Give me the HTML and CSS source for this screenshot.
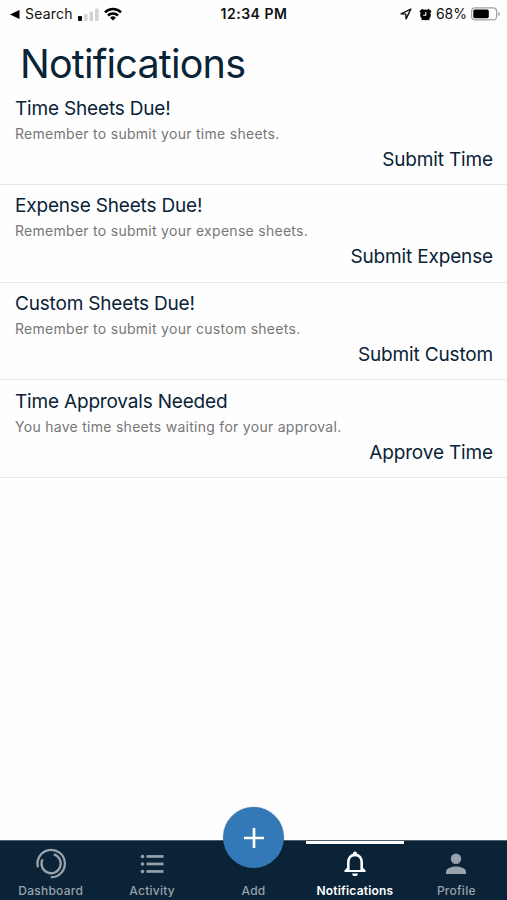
FILE: index.html
```html
<!DOCTYPE html>
<html lang="en">
<head>
    <meta charset="UTF-8">
    <meta name="viewport" content="width=device-width, initial-scale=1.0">
    <title>Notifications</title>
    <link rel="stylesheet" href="styles.css">
</head>
<body>
    <header class="status-bar">
        <div class="status-left">
            <svg class="back" width="10" height="9" viewBox="0 0 10 9"><path d="M0 4.5 9.5 0v9z"/></svg>
            <span class="search">Search</span>
            <svg class="signal" width="22" height="13" viewBox="0 0 22 13">
                <rect x="0" y="8" width="4" height="5" rx="1"/>
                <g fill="#d3d3d3">
                    <rect x="6" y="6" width="3.6" height="7" rx="1"/>
                    <rect x="11.5" y="3.5" width="3.6" height="9.5" rx="1"/>
                    <rect x="17" y="0.5" width="3.6" height="12.5" rx="1"/>
                </g>
            </svg>
            <svg class="wifi" width="18" height="14" viewBox="0 0 18 14">
                <g fill="none" stroke="#000" stroke-width="2.5">
                    <path d="M1 5.3a11.4 11.4 0 0 1 16 0"/>
                    <path d="M4 8.5a7.2 7.2 0 0 1 10 0"/>
                </g>
                <path d="M9 13.6 6.1 10.7a4.2 4.2 0 0 1 5.8 0z"/>
            </svg>
        </div>
        <div class="status-time">12:34 PM</div>
        <div class="status-right">
            <svg class="location" width="12" height="12" viewBox="0 0 12 12"><path d="M1 5.9 10.8 1.1 6.1 10.9 5.8 6.1z" fill="none" stroke="#111" stroke-width="1.4" stroke-linejoin="round"/></svg>
            <svg class="alarm" width="13" height="13" viewBox="0 0 13 13">
                <circle cx="6.5" cy="6.9" r="5.3"/>
                <path d="M.5 3.3 3.3.7l1.8 1.2L1.6 5zM12.5 3.3 9.7.7 7.9 1.9 11.4 5zM2.1 12.6l1.2-2.2 1.7 1zM10.9 12.6l-1.2-2.2-1.7 1z"/>
                <path d="M6.8 4v3.3H4.1" fill="none" stroke="#fff" stroke-width="1.1"/>
            </svg>
            <span class="percent">68%</span>
            <svg class="battery" width="30" height="14" viewBox="0 0 30 14">
                <rect x=".6" y=".9" width="25" height="12" rx="3.5" fill="#fff" stroke="#a3a3a3" stroke-width="1.2"/>
                <rect x="2.3" y="2.6" width="15.5" height="8.6" rx="1.7"/>
                <path d="M27.2 4.7c2.2.8 2.2 3.6 0 4.4z" fill="#a3a3a3"/>
            </svg>
        </div>
    </header>

    <main>
        <h1>Notifications</h1>
        <ul class="list">
            <li class="item">
                <h2>Time Sheets Due!</h2>
                <p>Remember to submit your time sheets.</p>
                <a class="action">Submit Time</a>
            </li>
            <li class="item">
                <h2>Expense Sheets Due!</h2>
                <p>Remember to submit your expense sheets.</p>
                <a class="action">Submit Expense</a>
            </li>
            <li class="item">
                <h2>Custom Sheets Due!</h2>
                <p>Remember to submit your custom sheets.</p>
                <a class="action">Submit Custom</a>
            </li>
            <li class="item">
                <h2>Time Approvals Needed</h2>
                <p>You have time sheets waiting for your approval.</p>
                <a class="action">Approve Time</a>
            </li>
        </ul>
    </main>

    <nav class="tabs">
        <a class="tab">
            <svg width="32" height="32" viewBox="0 0 32 32" fill="none" stroke="currentColor" stroke-width="2.3">
                <path d="M3 19.3A13.700 13.700 0 1 1 15.8 29.2"/>
                <path d="M18.8 6.4A9.600 9.600 0 1 1 7.6 11.2"/>
            </svg>
            <span>Dashboard</span>
        </a>
        <a class="tab">
            <svg width="32" height="32" viewBox="0 0 32 32" fill="currentColor">
                <circle cx="6.5" cy="8.5" r="1.8"/><rect x="10.5" y="7.1" width="17" height="2.7"/>
                <circle cx="6.5" cy="16" r="1.8"/><rect x="10.5" y="14.6" width="17" height="2.7"/>
                <circle cx="6.5" cy="23.5" r="1.8"/><rect x="10.5" y="22.1" width="17" height="2.7"/>
            </svg>
            <span>Activity</span>
        </a>
        <a class="tab">
            <div class="add-button">
                <svg width="22" height="22" viewBox="0 0 22 22"><path d="M11 1v20M1 11h20" stroke="#fff" stroke-width="2.7"/></svg>
            </div>
            <span>Add</span>
        </a>
        <a class="tab active">
            <svg width="32" height="32" viewBox="0 0 32 32" fill="currentColor">
                <path d="M9.3 22.5V14.5C9.3 9.700 12 6.900 16 6.900s6.7 2.800 6.700 7.600v8" fill="none" stroke="currentColor" stroke-width="2.6"/>
                <path d="M8 19.800v3.200h16v-3.200l2.300 2.500v1.700H5.700v-1.700z"/>
                <rect x="14" y="3.500" width="4" height="4.500" rx="2"/>
                <path d="M13.200 25.500h5.600a2.800 2.600 0 0 1-5.600 0z"/>
                <path d="M5.700 22h20.600v2H5.700z"/>
            </svg>
            <span>Notifications</span>
        </a>
        <a class="tab">
            <svg width="32" height="32" viewBox="0 0 32 32" fill="currentColor"><circle cx="16" cy="10.8" r="5.2"/><path d="M6 26v-2.300c0-3.600 6.500-5.200 10-5.200s10 1.600 10 5.200V26z"/></svg>
            <span>Profile</span>
        </a>
    </nav>
</body>
</html>
```
FILE: styles.css
```css
* {
    box-sizing: border-box;
}

body {
    margin: 0;
    height: 900px;
    display: flex;
    flex-direction: column;
    overflow: hidden;
    background-color: #fefefe;
    color: #0a2337;
    font-family: Inter, "Liberation Sans", sans-serif;
}

svg {
    display: block;
    flex: none;
}

.status-bar {
    display: grid;
    grid-template-columns: 1fr auto 1fr;
    align-items: center;
    height: 28px;
    padding: 0 6px 0 10px;
    color: #111;
    font-size: 14px;
    line-height: 28px;
}

.status-left,
.status-right {
    display: flex;
    align-items: center;
}

.status-right {
    justify-content: flex-end;
}

.search {
    margin: 0 5px;
    letter-spacing: 0.2px;
}

.wifi {
    margin-left: 4px;
}

.status-time {
    margin-left: -3px;
    font-weight: 600;
    letter-spacing: 0.5px;
}

.location {
    margin-right: 1px;
}

.alarm {
    margin: 0 4px 0 6px;
}

.battery {
    margin-left: 4px;
}

main {
    flex: 1;
}

h1 {
    margin: 0;
    padding: 11px 20px 0;
    height: 59px;
    font-size: 39.5px;
    font-weight: 400;
    letter-spacing: -0.8px;
    line-height: 50px;
}

.list {
    margin: 0;
    padding: 0;
    list-style: none;
}

.item {
    height: 97.8px;
    padding: 9.5px 14px 0 15px;
    border-bottom: 1px solid #e8e8e8;
}

.item h2 {
    margin: 0;
    font-size: 19px;
    font-weight: 400;
    letter-spacing: -0.18px;
    line-height: 24px;
}

.item p {
    margin: 0;
    color: #777;
    font-size: 14px;
    letter-spacing: 0.28px;
    line-height: 26px;
}

.action {
    display: block;
    font-size: 19px;
    letter-spacing: -0.15px;
    line-height: 26px;
    text-align: right;
}

.tabs {
    display: flex;
    height: 60px;
    background-color: #0a2337;
    border-top: 1px solid #52616e;
}

.tab {
    position: relative;
    flex: 1 1 0;
    display: flex;
    flex-direction: column;
    align-items: center;
    justify-content: flex-end;
    gap: 3px;
    padding-bottom: 1px;
    color: #98a2ac;
    font-size: 12px;
    font-weight: 500;
    letter-spacing: 0.25px;
    line-height: 16px;
}

.active {
    color: #fff;
    font-weight: 600;
    letter-spacing: 0.2px;
}

.active::before {
    content: "";
    position: absolute;
    top: 0;
    left: 2px;
    right: 2px;
    height: 3px;
    background-color: #fff;
}

/* the add button sticks out over the top of the bar */
.add-button {
    position: absolute;
    top: -34px;
    left: 20.6px;
    display: flex;
    align-items: center;
    justify-content: center;
    width: 61px;
    height: 61px;
    border-radius: 50%;
    background-color: #3378b7;
    box-shadow: 0 0 2px rgba(0, 0, 0, 0.2);
}
```
